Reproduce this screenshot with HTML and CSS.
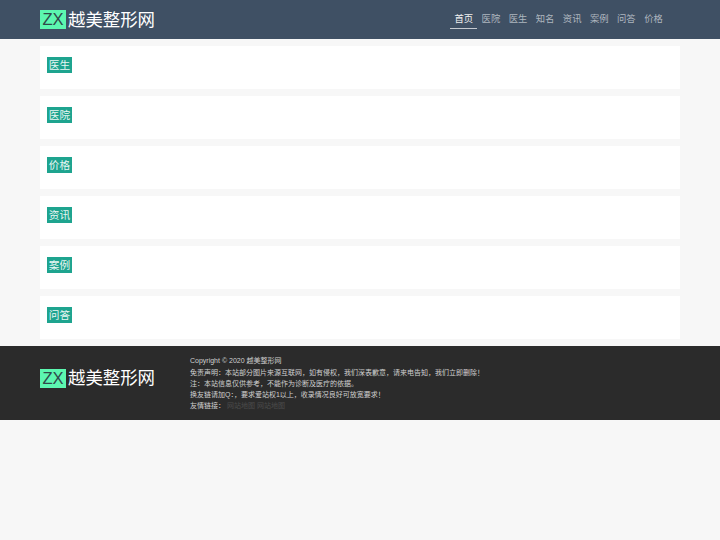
FILE: index.html
```html
<!DOCTYPE html>
<html lang="zh-CN">
<head>
<meta charset="utf-8">
<title>越美整形网</title>
<link rel="stylesheet" href="styles.css">
</head>
<body>
<header class="topbar">
  <div class="wrap topbar-inner">
    <a class="logo" href="#"><span class="logo-mark">ZX</span>越美整形网</a>
    <nav class="nav">
      <a class="nav-item active" href="#">首页</a>
      <a class="nav-item" href="#">医院</a>
      <a class="nav-item" href="#">医生</a>
      <a class="nav-item" href="#">知名</a>
      <a class="nav-item" href="#">资讯</a>
      <a class="nav-item" href="#">案例</a>
      <a class="nav-item" href="#">问答</a>
      <a class="nav-item" href="#">价格</a>
    </nav>
  </div>
</header>
<main class="wrap main">
  <section class="card"><h2 class="tag">医生</h2></section>
  <section class="card"><h2 class="tag">医院</h2></section>
  <section class="card"><h2 class="tag">价格</h2></section>
  <section class="card"><h2 class="tag">资讯</h2></section>
  <section class="card"><h2 class="tag">案例</h2></section>
  <section class="card"><h2 class="tag">问答</h2></section>
</main>
<footer class="footer">
  <div class="wrap footer-inner">
    <a class="logo" href="#"><span class="logo-mark">ZX</span>越美整形网</a>
    <div class="info">
      <p>Copyright © 2020 越美整形网</p>
      <p>免责声明：本站部分图片来源互联网，如有侵权，我们深表歉意，请来电告知，我们立即删除！</p>
      <p>注：本站信息仅供参考，不能作为诊断及医疗的依据。</p>
      <p>换友链请加Q：，要求爱站权1以上，收录情况良好可放宽要求！</p>
      <p>友情链接： <a class="flink" href="#">网站地图</a> <a class="flink" href="#">网站地图</a></p>
    </div>
  </div>
</footer>
</body>
</html>
```
FILE: styles.css
```css
* { box-sizing: border-box; }
html, body { margin: 0; padding: 0; }
body {
  background: #f7f7f7;
  font-family: "Liberation Sans", "Noto Sans CJK SC", sans-serif;
  color: #333;
}
a { text-decoration: none; }
.wrap { width: 640px; margin: 0 auto; }
.topbar { height: 39px; background: #3f5064; }
.topbar-inner { display: flex; align-items: center; justify-content: space-between; height: 39px; }
.logo { display: flex; align-items: center; font-size: 17.4px; line-height: 20px; color: #fff; }
.logo-mark {
  width: 26px; height: 19px; margin-right: 2px;
  background: #5cf7b0; color: #2f4a4a;
  font-size: 16.5px; font-weight: 400; line-height: 19px; text-align: center;
}
.nav { display: flex; margin-right: 13px; }
.nav-item {
  padding: 0 4.23px; height: 19px;
  font-size: 9.33px; line-height: 19px; color: #aeb6bf;
}
.nav-item.active { color: #f0f0f0; border-bottom: 1px solid #c5cad0; }
.main { display: flex; flex-direction: column; gap: 7.33px; padding-top: 7px; padding-bottom: 7px; }
.card { height: 42.67px; background: #fff; padding-top: 11px; padding-left: 7px; }
.tag {
  display: block; width: 25px; height: 16px; margin: 0;
  background: #1ea48f; color: #e8f6f3;
  font-size: 10.67px; font-weight: 400; line-height: 16px; text-align: center;
}
.footer { height: 74px; background: #2b2b2b; }
.footer-inner { display: flex; align-items: center; height: 74px; }
.footer .logo { width: 150px; flex: none; margin-top: -9px; }
.info { font-size: 7px; line-height: 11.25px; color: #d0d0d0; padding-top: 2px; }
.info p { margin: 0; }
.flink { color: #4c4c4c; }
```
